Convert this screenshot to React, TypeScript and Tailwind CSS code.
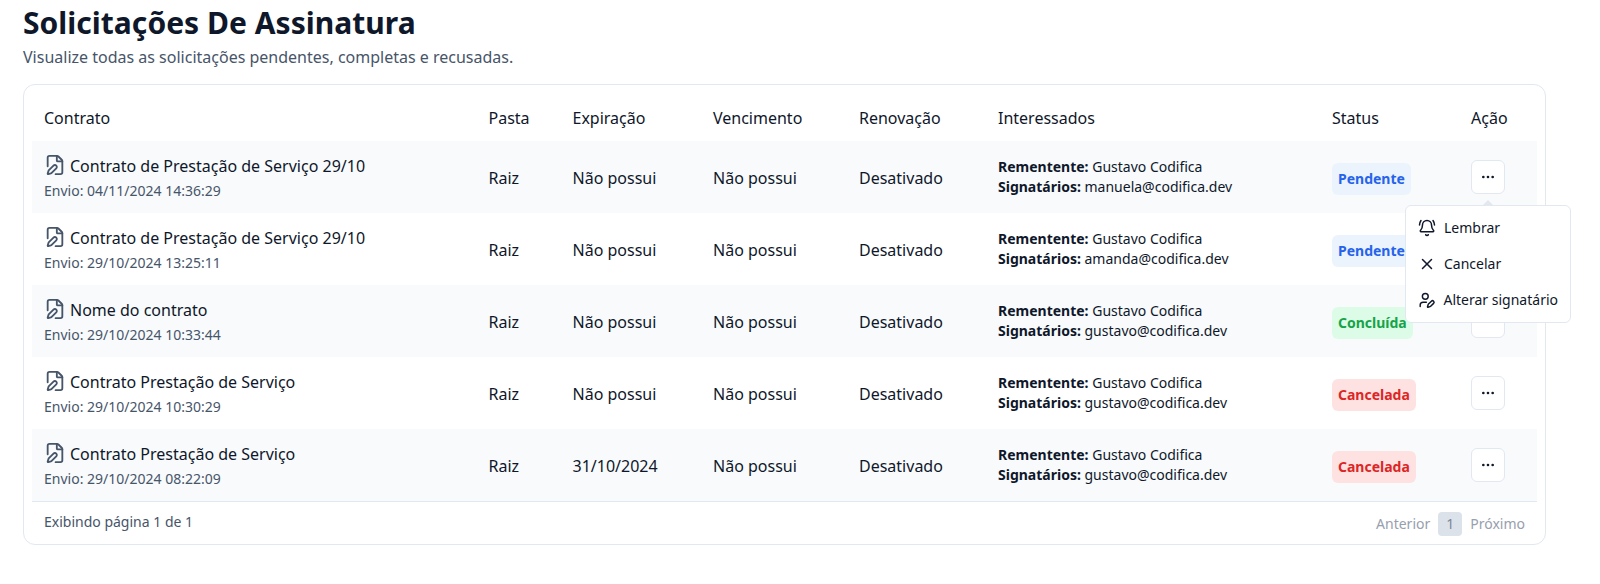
import React from "react";
import { BellRing, Ellipsis, FilePen, UserPen, X } from "lucide-react";

type Status = "Pendente" | "Concluída" | "Cancelada";

interface Contract {
  name: string;
  sentAt: string;
  expiration: string;
  signer: string;
  status: Status;
}

const contracts: Contract[] = [
  { name: "Contrato de Prestação de Serviço 29/10", sentAt: "04/11/2024 14:36:29", expiration: "Não possui", signer: "manuela@codifica.dev", status: "Pendente" },
  { name: "Contrato de Prestação de Serviço 29/10", sentAt: "29/10/2024 13:25:11", expiration: "Não possui", signer: "amanda@codifica.dev", status: "Pendente" },
  { name: "Nome do contrato", sentAt: "29/10/2024 10:33:44", expiration: "Não possui", signer: "gustavo@codifica.dev", status: "Concluída" },
  { name: "Contrato Prestação de Serviço", sentAt: "29/10/2024 10:30:29", expiration: "Não possui", signer: "gustavo@codifica.dev", status: "Cancelada" },
  { name: "Contrato Prestação de Serviço", sentAt: "29/10/2024 08:22:09", expiration: "31/10/2024", signer: "gustavo@codifica.dev", status: "Cancelada" },
];

const statusStyles: Record<Status, string> = {
  Pendente: "bg-[#ebf4fd] text-[#2563eb]",
  Concluída: "bg-[#dcfce7] text-[#16a34a]",
  Cancelada: "bg-[#fee2e2] text-[#dc2626]",
};

const columns = "grid grid-cols-[444.5px_84px_140.5px_146px_139px_334px_139px_78px]";

function ActionMenu() {
  return (
    <div className="absolute -left-[66px] top-[45px] z-10 w-[166px]">
      <div className="absolute -top-[5px] left-[78px] h-0 w-0 border-x-[5px] border-b-[5px] border-x-transparent border-b-[#e2e8f0]" />
      <ul className="rounded-md border border-[#e2e8f0] bg-white p-1 text-sm text-[#0f172a]">
        <li className="flex h-9 items-center gap-2 px-2">
          <BellRing size={18} />
          Lembrar
        </li>
        <li className="flex h-9 items-center gap-2 px-2">
          <X size={18} />
          Cancelar
        </li>
        <li className="flex h-9 items-center gap-2 whitespace-nowrap px-2">
          <UserPen size={18} />
          Alterar signatário
        </li>
      </ul>
    </div>
  );
}

function ContractRow({ contract, menuOpen }: { contract: Contract; menuOpen: boolean }) {
  return (
    <div className={`${columns} h-[72px] items-center odd:bg-white even:bg-[#f8fafc]`}>
      <div className="px-3 pt-px">
        <div className="flex items-center gap-1">
          <FilePen size={22} strokeWidth={2} className="-mt-0.5 text-[#475569]" />
          {contract.name}
        </div>
        <p className="pt-[3px] text-sm text-[#475569]">Envio: {contract.sentAt}</p>
      </div>
      <div className="px-3 pt-0.5">Raiz</div>
      <div className="px-3 pt-0.5">{contract.expiration}</div>
      <div className="px-3 pt-0.5">Não possui</div>
      <div className="px-3 pt-0.5">Desativado</div>
      <div className="px-3 text-sm">
        <p>
          <b>Rementente:</b> Gustavo Codifica
        </p>
        <p>
          <b>Signatários:</b> {contract.signer}
        </p>
      </div>
      <div className="flex px-3 pt-1">
        <span className={`rounded-md p-1.5 text-sm font-bold ${statusStyles[contract.status]}`}>{contract.status}</span>
      </div>
      <div className="px-3">
        <div className="relative w-[34px]">
          <button className="flex h-[34px] w-[34px] items-center justify-center rounded-md border border-[#e2e8f0] bg-white">
            <Ellipsis size={16} />
          </button>
          {menuOpen && <ActionMenu />}
        </div>
      </div>
    </div>
  );
}

export default function App() {
  return (
    <main className="h-[584px] w-[1600px] overflow-hidden bg-white pl-[23px] font-['Noto_Sans',sans-serif] text-base text-[#0f172a]">
      <h1 className="pt-[5px] text-3xl font-bold tracking-[0.03px]">Solicitações De Assinatura</h1>
      <p className="pt-1 text-[#475569]">Visualize todas as solicitações pendentes, completas e recusadas.</p>
      <section className="mt-[15px] w-[1523px] rounded-xl border border-[#e2e8f0] p-2">
        <div className="border-b border-[#e2e8f0]">
          <div className={`${columns} h-12 items-center pt-0.5`}>
            <div className="px-3">Contrato</div>
            <div className="px-3">Pasta</div>
            <div className="px-3">Expiração</div>
            <div className="px-3">Vencimento</div>
            <div className="px-3">Renovação</div>
            <div className="px-3">Interessados</div>
            <div className="px-3">Status</div>
            <div className="px-3">Ação</div>
          </div>
          {contracts.map((contract, index) => (
            <ContractRow key={contract.sentAt} contract={contract} menuOpen={index === 0} />
          ))}
        </div>
        <footer className="flex h-[34px] items-start justify-between px-3 pt-2.5 text-sm">
          <p className="text-[#475569]">Exibindo página 1 de 1</p>
          <nav className="flex items-center gap-2">
            <span className="text-[#97a0ae]">Anterior</span>
            <span className="flex h-6 w-6 items-center justify-center rounded bg-[#dce2ea] text-[#7c8898]">1</span>
            <span className="text-[#97a0ae]">Próximo</span>
          </nav>
        </footer>
      </section>
    </main>
  );
}
